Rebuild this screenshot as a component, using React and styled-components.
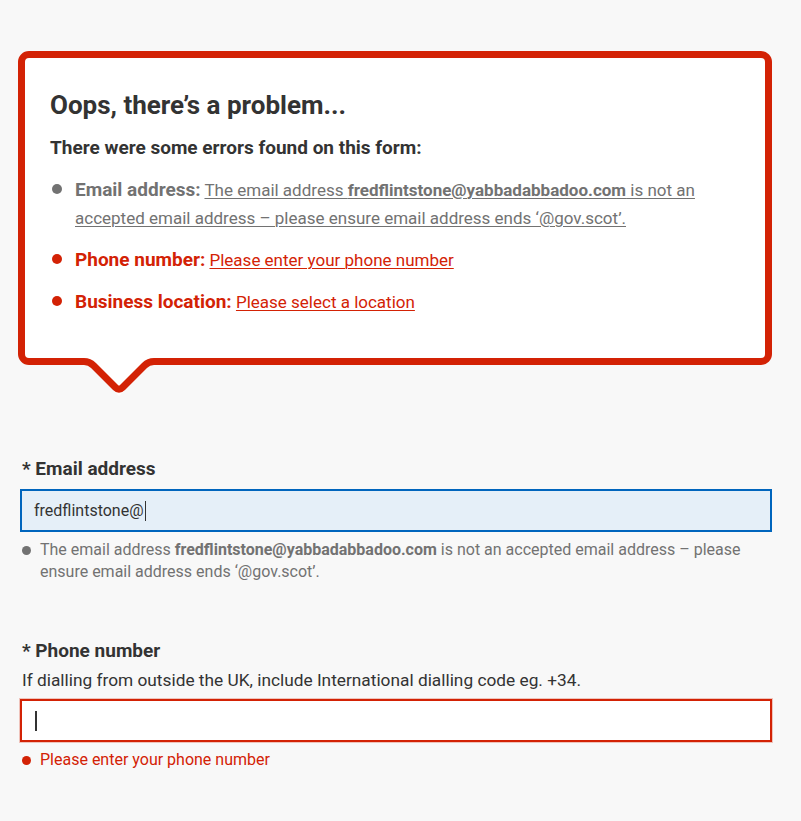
import styled, { createGlobalStyle } from 'styled-components';

const RED = '#d32205';
const GREY = '#727272';
const TEXT = '#333333';
const BLUE = '#0065bd';

const GlobalStyle = createGlobalStyle`
  html, body {
    margin: 0;
    padding: 0;
    background: #f8f8f8;
  }
  body {
    font-family: Roboto, "Noto Sans", "Liberation Sans", sans-serif;
    color: ${TEXT};
  }
  * {
    box-sizing: border-box;
  }
`;

const errors = [
  {
    id: 'email',
    label: 'Email address:',
    resolved: true,
    message: (
      <>
        The email address <b>fredflintstone@yabbadabbadoo.com</b> is not an
        accepted email address – please ensure email address ends ‘@gov.scot’.
      </>
    ),
  },
  { id: 'phone', label: 'Phone number:', message: 'Please enter your phone number' },
  { id: 'location', label: 'Business location:', message: 'Please select a location' },
];

const App = () => {
  return (
    <>
      <GlobalStyle />
      <Page>
        <ErrorSummary>
          <Title>Oops, there’s a problem...</Title>
          <Subtitle>There were some errors found on this form:</Subtitle>
          <ErrorList>
            {errors.map(err => (
              <ErrorItem key={err.id} $resolved={err.resolved}>
                <Dot $resolved={err.resolved} />
                <span>
                  <strong>{err.label}</strong>{' '}
                  <ErrorLink href={`#${err.id}`}>{err.message}</ErrorLink>
                </span>
              </ErrorItem>
            ))}
          </ErrorList>
          <Pointer width="100" height="40" viewBox="0 0 100 40">
            <path d="M15 0 H85 V3.5 L50 38 L15 3.5 Z" fill="#fff" />
            <path
              d="M0 3.5 H15 Q20.5 3.5 24.5 7.5 L46.5 29.5 Q50 33 53.5 29.5 L75.5 7.5 Q79.5 3.5 85 3.5 H100"
              fill="none"
              stroke={RED}
              strokeWidth="7"
              strokeLinejoin="round"
            />
          </Pointer>
        </ErrorSummary>

        <Form>
          <Field>
            <Label>* Email address</Label>
            <InputBox $focused>
              fredflintstone@
              <Caret />
            </InputBox>
            <FieldError $resolved>
              <SmallDot $resolved />
              <span>
                The email address <b>fredflintstone@yabbadabbadoo.com</b> is not an accepted
                email address – please ensure email address ends ‘@gov.scot’.
              </span>
            </FieldError>
          </Field>

          <Field>
            <Label>* Phone number</Label>
            <Hint>If dialling from outside the UK, include International dialling code eg. +34.</Hint>
            <InputBox $invalid>
              <Caret />
            </InputBox>
            <FieldError>
              <SmallDot />
              <span>Please enter your phone number</span>
            </FieldError>
          </Field>
        </Form>
      </Page>
    </>
  );
};

const Page = styled.div`
  padding: 51px 29px 40px 18px;
`;

const ErrorSummary = styled.section`
  position: relative;
  background: #fff;
  border: 7px solid ${RED};
  border-radius: 11px;
  padding: 31px 25px 42px 25px;
`;

const Title = styled.h2`
  margin: 0;
  font-size: 26px;
  line-height: 32px;
  font-weight: 700;
  color: ${TEXT};
`;

const Subtitle = styled.p`
  margin: 15px 0 0;
  font-size: 19px;
  line-height: 24px;
  font-weight: 700;
  color: ${TEXT};
`;

const ErrorList = styled.ul`
  list-style: none;
  margin: 16px 0 0;
  padding: 0;
  display: flex;
  flex-direction: column;
  gap: 14px;
`;

const ErrorItem = styled.li`
  display: flex;
  font-size: 17px;
  line-height: 28px;
  color: ${props => (props.$resolved ? GREY : RED)};

  strong {
    font-size: 19px;
    font-weight: 700;
  }
`;

const Dot = styled.span`
  flex: none;
  width: 10px;
  height: 10px;
  margin: 8px 13px 0 2px;
  border-radius: 50%;
  background: ${props => (props.$resolved ? GREY : RED)};
`;

const ErrorLink = styled.a`
  color: inherit;
  text-decoration: underline;
  text-underline-offset: 2px;
  text-decoration-thickness: 1px;

  b {
    font-weight: 700;
  }
`;

const Pointer = styled.svg`
  position: absolute;
  left: 44px;
  top: 100%;
  overflow: visible;
`;

const Form = styled.div`
  margin: 92px 0 0 2px;
  display: flex;
  flex-direction: column;
  gap: 56px;
`;

const Field = styled.div`
  display: flex;
  flex-direction: column;
`;

const Label = styled.label`
  padding-left: 2px;
  font-size: 19px;
  line-height: 24px;
  font-weight: 700;
  color: ${TEXT};
  margin-bottom: 8px;
`;

const Hint = styled.p`
  margin: -2px 0 8px;
  padding-left: 2px;
  font-size: 17.3px;
  line-height: 22px;
  color: ${TEXT};
`;

const InputBox = styled.div`
  display: flex;
  align-items: center;
  height: 43px;
  padding: 0 12px;
  font-size: 16px;
  color: ${TEXT};
  background: ${props => (props.$focused ? '#e5eff8' : '#fff')};
  border: 2px solid ${props => (props.$focused ? BLUE : props.$invalid ? RED : '#b3b3b3')};
  box-shadow: ${props => (props.$invalid ? '0 0 0 1px rgba(211, 34, 5, 0.25)' : 'none')};
`;

const Caret = styled.span`
  display: inline-block;
  width: 1.5px;
  height: 20px;
  margin-left: 1px;
  background: ${TEXT};
`;

const FieldError = styled.div`
  display: flex;
  margin-top: 7px;
  font-size: 16px;
  line-height: 22px;
  color: ${props => (props.$resolved ? GREY : RED)};

  b {
    font-weight: 700;
  }
`;

const SmallDot = styled.span`
  flex: none;
  width: 9px;
  height: 9px;
  margin: 7px 9px 0 2px;
  border-radius: 50%;
  background: ${props => (props.$resolved ? GREY : RED)};
`;

export default App;
